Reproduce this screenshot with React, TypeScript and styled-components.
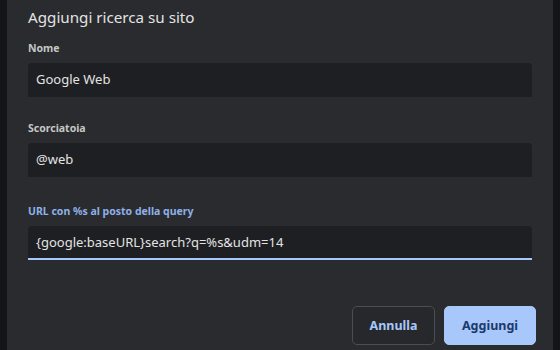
import React from "react";
import { styled, createGlobalStyle } from "styled-components";

const GlobalStyle = createGlobalStyle`
  html, body {
    margin: 0;
    padding: 0;
    background: #121316;
  }
  body {
    font-family: "Noto Sans", "Open Sans", sans-serif;
  }
`;

const Page = styled.div`
  display: flex;
  width: 560px;
  height: 350px;
  overflow: hidden;
  background: #121316;
`;

const Backdrop = styled.div`
  width: 7px;
  flex-shrink: 0;
  background: #141518;
`;

const Dialog = styled.div`
  flex: 1;
  display: flex;
  flex-direction: column;
  background: #292b2e;
  padding: 5px 21px 0 21px;
`;

const Title = styled.h1`
  margin: 0 0 12px 0;
  font-size: 15.2px;
  font-weight: 400;
  color: #e3e3e3;
  line-height: 24px;
`;

const Field = styled.div<{ $gap?: number }>`
  display: flex;
  flex-direction: column;
  margin-bottom: ${({ $gap }) => $gap ?? 24}px;
`;

const Label = styled.label<{ $active?: boolean }>`
  font-size: 10.5px;
  font-weight: 700;
  line-height: 14px;
  margin-bottom: 8px;
  color: ${({ $active }) => ($active ? "#8fb0e8" : "#c4c7c5")};
`;

const Input = styled.div<{ $active?: boolean }>`
  height: 34px;
  box-sizing: border-box;
  display: flex;
  align-items: center;
  padding: 0 8px;
  background: #1e1f22;
  border-radius: 4px 4px 0 0;
  font-size: 13px;
  color: #e3e3e3;
  border-bottom: 2px solid ${({ $active }) => ($active ? "#a8c7fa" : "transparent")};
`;

const Footer = styled.div`
  display: flex;
  justify-content: flex-end;
  gap: 9px;
  margin-top: 46px;
  margin-right: -4px;
`;

const Button = styled.button<{ $primary?: boolean; $width: number }>`
  width: ${({ $width }) => $width}px;
  height: 39px;
  box-sizing: border-box;
  padding: 0 16px;
  border-radius: 5px;
  font-family: "Noto Sans", "Open Sans", sans-serif;
  font-size: 12.5px;
  font-weight: 700;
  border: 1px solid ${({ $primary }) => ($primary ? "#a8c7fa" : "#4a4d51")};
  background: ${({ $primary }) => ($primary ? "#a8c7fa" : "#26282b")};
  color: ${({ $primary }) => ($primary ? "#1b3a6b" : "#a8c7fa")};
`;

export default function App() {
  return (
    <>
      <GlobalStyle />
      <Page>
        <Backdrop />
        <Dialog>
          <Title>Aggiungi ricerca su sito</Title>
          <Field>
            <Label>Nome</Label>
            <Input>Google Web</Input>
          </Field>
          <Field $gap={27}>
            <Label>Scorciatoia</Label>
            <Input>@web</Input>
          </Field>
          <Field $gap={0}>
            <Label $active>URL con %s al posto della query</Label>
            <Input $active>{"{google:baseURL}search?q=%s&udm=14"}</Input>
          </Field>
          <Footer>
            <Button $width={83}>Annulla</Button>
            <Button $primary $width={92}>Aggiungi</Button>
          </Footer>
        </Dialog>
        <Backdrop />
      </Page>
    </>
  );
}
